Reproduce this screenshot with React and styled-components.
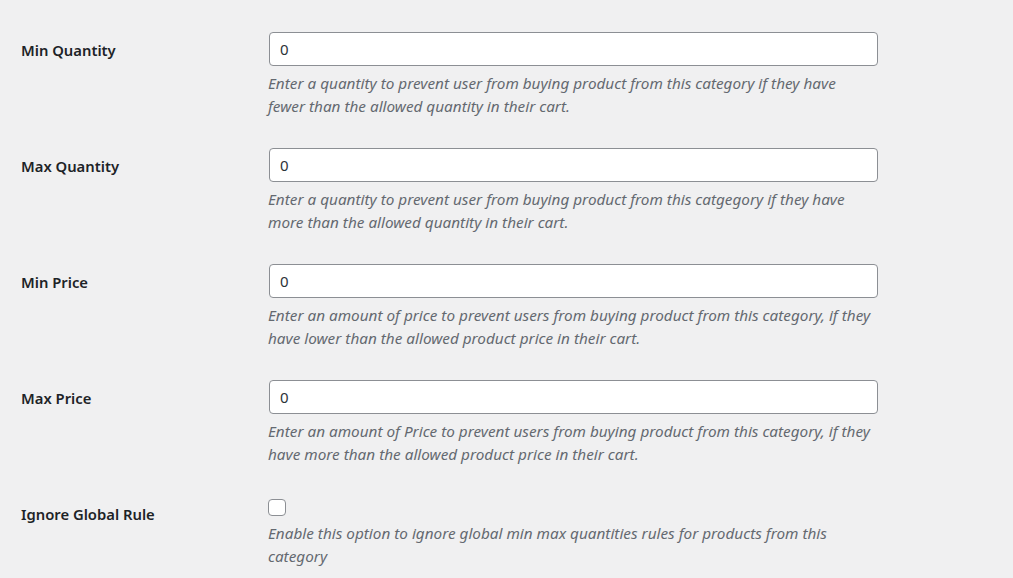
import styled, { createGlobalStyle } from 'styled-components';

const GlobalStyle = createGlobalStyle`
    html, body {
        margin: 0;
        padding: 0;
        background: #f0f0f1;
    }
    body {
        font-family: "Noto Sans", "Open Sans", sans-serif;
        color: #1d2327;
    }
`;

const fields = [
    {
        label: 'Min Quantity',
        type: 'number',
        lines: [
            'Enter a quantity to prevent user from buying product from this category if they have',
            'fewer than the allowed quantity in their cart.',
        ],
    },
    {
        label: 'Max Quantity',
        type: 'number',
        lines: [
            'Enter a quantity to prevent user from buying product from this catgegory if they have',
            'more than the allowed quantity in their cart.',
        ],
    },
    {
        label: 'Min Price',
        type: 'number',
        lines: [
            'Enter an amount of price to prevent users from buying product from this category, if they',
            'have lower than the allowed product price in their cart.',
        ],
    },
    {
        label: 'Max Price',
        type: 'number',
        lines: [
            'Enter an amount of Price to prevent users from buying product from this category, if they',
            'have more than the allowed product price in their cart.',
        ],
    },
    {
        label: 'Ignore Global Rule',
        type: 'checkbox',
        lines: [
            'Enable this option to ignore global min max quantities rules for products from this',
            'category',
        ],
    },
];

const App = () => {
    return (
        <>
            <GlobalStyle />
            <FormTable>
                {fields.map((field) => (
                    <Row key={field.label}>
                        <Label>{field.label}</Label>
                        <Field>
                            {field.type === 'checkbox' ? (
                                <Checkbox type="checkbox" />
                            ) : (
                                <TextInput type="text" defaultValue="0" />
                            )}
                            <Description>
                                {field.lines.map((line, i) => (
                                    <span key={i}>{line}</span>
                                ))}
                            </Description>
                        </Field>
                    </Row>
                ))}
            </FormTable>
        </>
    );
};

const FormTable = styled.div`
    display: flex;
    flex-direction: column;
    padding: 17px 0 0 21px;
`;

const Row = styled.div`
    display: grid;
    grid-template-columns: 238px 1fr;
    align-items: start;
`;

const Label = styled.div`
    padding-top: 24px;
    font-size: 14.8px;
    font-weight: 600;
    line-height: 18px;
    color: #1d2327;
`;

const Field = styled.div`
    display: flex;
    flex-direction: column;
    align-items: flex-start;
    padding: 15px 10px;
`;

const TextInput = styled.input`
    box-sizing: border-box;
    width: 609px;
    height: 34px;
    margin: 0;
    padding: 0 10px;
    background: #fff;
    border: 1px solid #8c8f94;
    border-radius: 4px;
    font-family: "Noto Sans", "Open Sans", sans-serif;
    font-size: 15px;
    color: #2c3338;
    outline: none;
`;

const Checkbox = styled.input`
    appearance: none;
    box-sizing: border-box;
    width: 18px;
    height: 17px;
    margin: 3px 0 0 -1px;
    background: #fff;
    border: 1px solid #8c8f94;
    border-radius: 4px;
`;

const Description = styled.p`
    display: flex;
    flex-direction: column;
    margin: 6px 0 0 -1px;
    font-size: 15.3px;
    font-style: italic;
    line-height: 23px;
    color: #646970;
    white-space: nowrap;
`;

export default App;
